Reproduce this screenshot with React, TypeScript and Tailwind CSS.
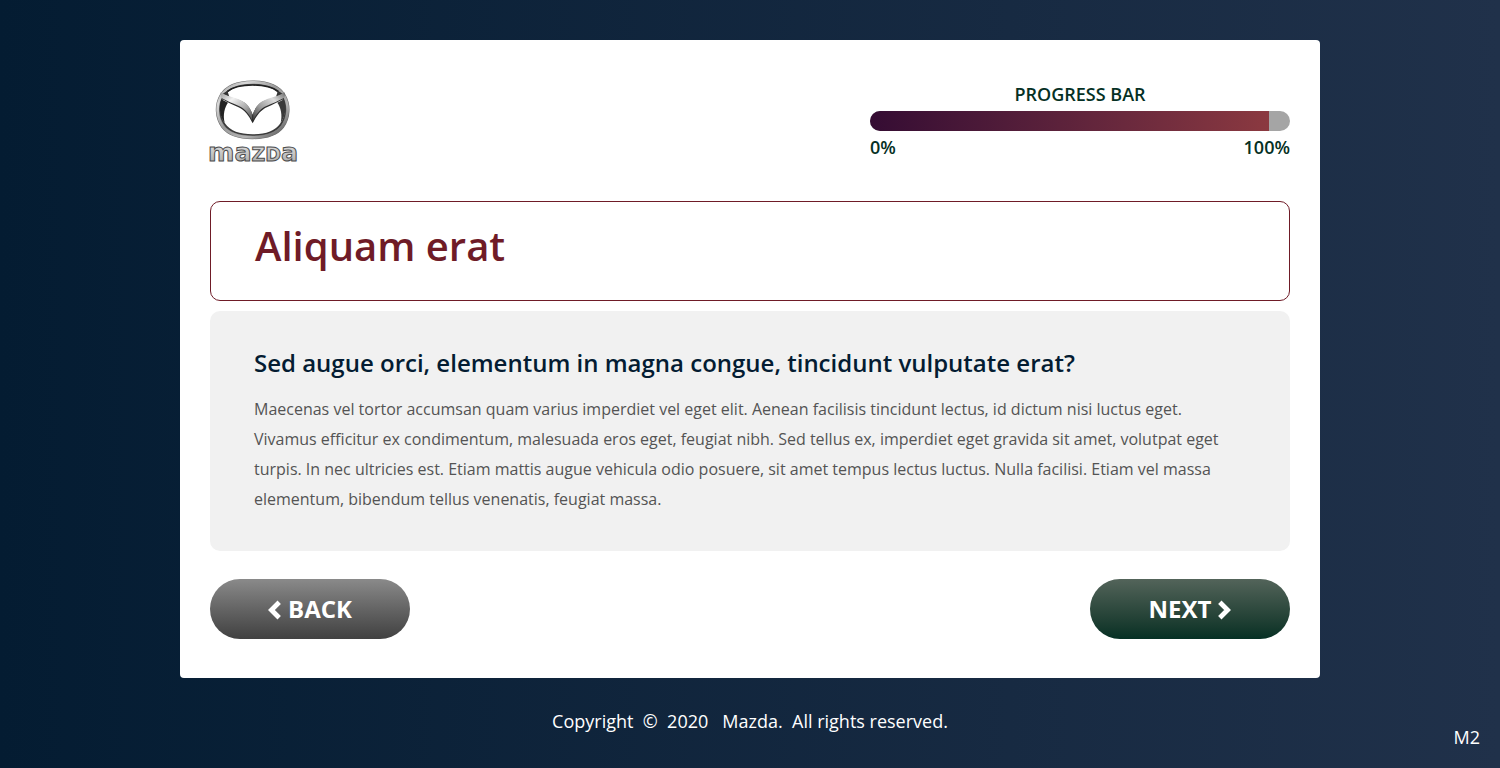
import React from "react";

function MazdaLogo() {
  return (
    <svg viewBox="24 30 270 252" className="-ml-0.5 h-[84px] w-[90px] overflow-visible" role="img" aria-label="Mazda">
      <defs>
        <linearGradient id="ring" x1="0" y1="0" x2="1" y2="1">
          <stop offset="0" stopColor="#8a8a8a" />
          <stop offset="0.2" stopColor="#d8d8d8" />
          <stop offset="0.45" stopColor="#9b9b9b" />
          <stop offset="0.7" stopColor="#b4b4b4" />
          <stop offset="1" stopColor="#4a4a4a" />
        </linearGradient>
        <linearGradient id="wingLeft" x1="0" y1="0" x2="1" y2="1">
          <stop offset="0" stopColor="#9a9a9a" />
          <stop offset="0.3" stopColor="#f2f2f2" />
          <stop offset="0.65" stopColor="#a8a8a8" />
          <stop offset="1" stopColor="#444444" />
        </linearGradient>
        <linearGradient id="wingRight" x1="1" y1="0" x2="0" y2="1">
          <stop offset="0" stopColor="#707070" />
          <stop offset="0.3" stopColor="#dddddd" />
          <stop offset="0.65" stopColor="#999999" />
          <stop offset="1" stopColor="#333333" />
        </linearGradient>
        <linearGradient id="word" x1="0" y1="0" x2="0" y2="1">
          <stop offset="0" stopColor="#eeeeee" />
          <stop offset="1" stopColor="#a5a5a5" />
        </linearGradient>
      </defs>
      <path
        d="M158 41C203 41 230 53 246 79C262 105 261 138 242 164C225 188 197 196 158 196C119 196 91 188 74 164C55 138 54 105 70 79C86 53 113 41 158 41Z"
        fill="none"
        stroke="#3a3a3a"
        strokeWidth="6"
      />
      <path
        d="M158 37C206 37 236 50 252 77C268 105 267 141 247 170C228 195 198 202 158 202C118 202 88 195 69 170C49 141 48 105 64 77C80 50 110 37 158 37Z"
        fill="none"
        stroke="#6c6c6c"
        strokeWidth="11"
      />
      <path
        d="M158 37C206 37 236 50 252 77C268 105 267 141 247 170C228 195 198 202 158 202C118 202 88 195 69 170C49 141 48 105 64 77C80 50 110 37 158 37Z"
        fill="none"
        stroke="url(#ring)"
        strokeWidth="8"
      />
      <path d="M82 64C103 48 129 45 158 45C187 45 213 48 235 64" fill="none" stroke="#1f1f1f" strokeWidth="5" />
      <path d="M64 88L84 98C74 112 68 134 74 158C61 142 55 114 64 88Z" fill="#222222" />
      <path d="M252 88L232 98C242 112 248 134 242 158C255 142 261 114 252 88Z" fill="#3a3a3a" />
      <path d="M82 62L66 73L88 80Z" fill="#333333" />
      <path d="M234 62L250 73L228 80Z" fill="#333333" />
      <path
        d="M62 70C80 81 101 84 119 91C142 99 152 118 158 134C164 118 174 99 197 91C215 84 236 81 254 70L251 87C233 97 218 104 202 111C181 120 169 138 158 160C147 138 135 120 114 111C98 104 84 98 66 87Z"
        fill="#2c2c2c"
      />
      <path d="M62 67C80 79 101 82 119 89C142 97 152 116 158 134V154C148 134 137 116 115 107C100 101 81 92 63 83Z" fill="url(#wingLeft)" />
      <path d="M254 67C236 79 215 82 197 89C174 97 164 116 158 134V154C168 134 179 116 201 107C216 101 235 92 253 83Z" fill="url(#wingRight)" />
      <path d="M158 134V156" stroke="#222222" strokeWidth="2" />
      <text
        x="24"
        y="273"
        fill="url(#word)"
        stroke="#4b4b4b"
        strokeWidth="3"
        className="font-['DejaVu_Sans',sans-serif] font-bold"
      >
        <tspan fontSize="76">ma</tspan>
        <tspan fontSize="57">ZD</tspan>
        <tspan fontSize="76">a</tspan>
      </text>
    </svg>
  );
}

function Chevron({ direction }: { direction: "left" | "right" }) {
  return (
    <svg viewBox="0 0 14 20" className="mt-0.5 h-5 w-3.5" aria-hidden="true">
      <path
        d={direction === "left" ? "M11.2 2.2L3.4 10L11.2 17.8" : "M2.8 2.2L10.6 10L2.8 17.8"}
        fill="none"
        stroke="currentColor"
        strokeWidth="4.8"
      />
    </svg>
  );
}

function Progress({ value }: { value: number }) {
  return (
    <section className="mt-0.5 w-full max-w-[420px] text-lg leading-6 font-semibold text-[#053024]">
      <h2 id="progress-label" className="text-center">PROGRESS BAR</h2>
      <div
        role="progressbar"
        aria-labelledby="progress-label"
        aria-valuenow={value}
        aria-valuemin={0}
        aria-valuemax={100}
        className="mt-[5px] h-5 overflow-hidden rounded-full bg-[#a5a5a5]"
      >
        <div className="h-full bg-linear-to-r from-[#350c33] to-[#8b3940]" style={{ width: `${value}%` }} />
      </div>
      <div className="mt-1 flex justify-between">
        <span>0%</span>
        <span>100%</span>
      </div>
    </section>
  );
}

export default function App() {
  return (
    <div className="flex min-h-screen flex-col bg-linear-to-r from-[#041c32] to-[#20314a] px-5 pt-10 font-['Open_Sans',sans-serif]">
      <main className="mx-auto w-full max-w-[1140px] rounded bg-white px-[30px] pt-10 pb-[39px]">
        <header className="flex items-start justify-between gap-8">
          <MazdaLogo />
          <Progress value={95} />
        </header>

        <div className="mt-[37px] rounded-[10px] border border-[#6f1b27] px-11 pt-3.5 pb-6">
          <h1 className="text-[40px] leading-[60px] font-semibold text-[#6f1b27]">Aliquam erat</h1>
        </div>

        <section className="mt-2.5 rounded-[10px] bg-[#f1f1f1] px-11 pt-8 pb-[37px]">
          <h2 className="text-2xl leading-10 font-semibold text-[#041c32]">
            Sed augue orci, elementum in magna congue, tincidunt vulputate erat?
          </h2>
          <p className="mt-[11px] text-base leading-[30px] text-[#545454]">
            Maecenas vel tortor accumsan quam varius imperdiet vel eget elit. Aenean facilisis tincidunt lectus, id
            dictum nisi luctus eget. Vivamus efficitur ex condimentum, malesuada eros eget, feugiat nibh. Sed tellus
            ex, imperdiet eget gravida sit amet, volutpat eget turpis. In nec ultricies est. Etiam mattis augue
            vehicula odio posuere, sit amet tempus lectus luctus. Nulla facilisi. Etiam vel massa elementum, bibendum
            tellus venenatis, feugiat massa.
          </p>
        </section>

        <nav className="mt-7 flex justify-between gap-4 text-2xl font-bold text-white">
          <button type="button" className="flex h-[60px] w-[200px] items-center justify-center gap-1.5 rounded-full bg-linear-to-b from-[#8a8a8a] to-[#414141]">
            <Chevron direction="left" />
            BACK
          </button>
          <button type="button" className="flex h-[60px] w-[200px] items-center justify-center gap-1.5 rounded-full bg-linear-to-b from-[#53645a] to-[#053024]">
            NEXT
            <Chevron direction="right" />
          </button>
        </nav>
      </main>

      <footer className="mt-[27px] text-lg leading-8 text-white">
        <p className="text-center whitespace-pre">{"Copyright  ©  2020   Mazda.  All rights reserved."}</p>
        <p className="-mt-4 text-right">M2</p>
      </footer>
    </div>
  );
}
